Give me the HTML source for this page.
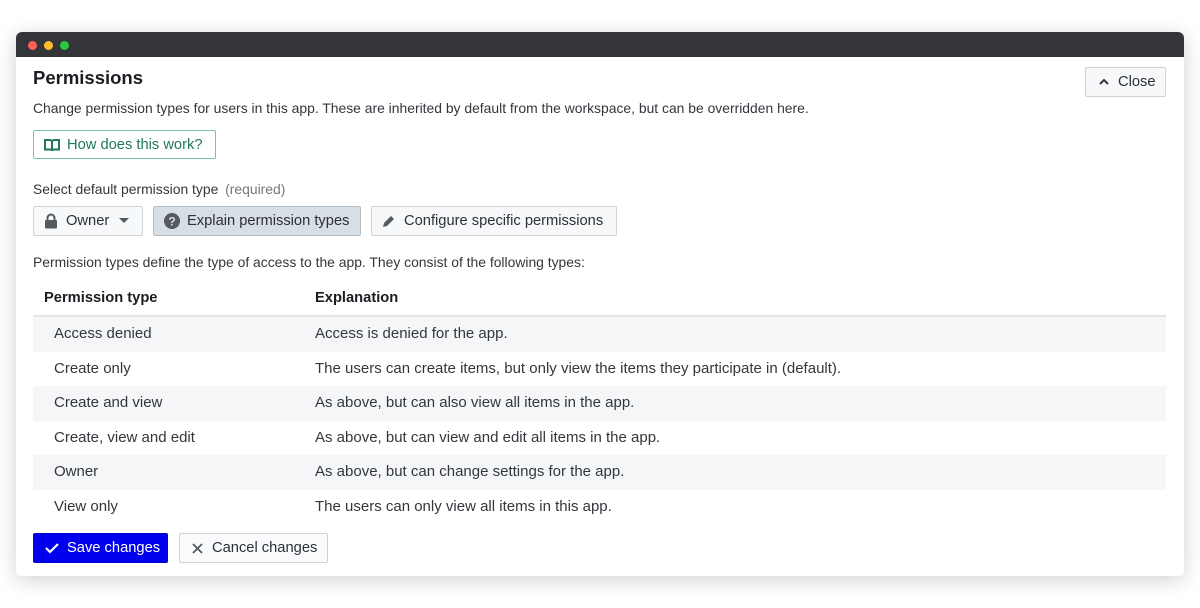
<!DOCTYPE html>
<html><head><style>
body{margin:0;width:1200px;height:608px;background:#fff;font-family:"Liberation Sans",sans-serif;color:#1f2328;position:relative;overflow:hidden}
.win{position:absolute;left:16px;top:32px;width:1168px;height:544px;background:#fff;border-radius:6px;box-shadow:0 4px 20px rgba(0,0,0,.18);overflow:hidden}
.bar{height:25px;background:#333538;position:relative}
.dot{position:absolute;top:9px;width:9px;height:9px;border-radius:50%}
.a{position:absolute;white-space:nowrap}
.btn{position:absolute;box-sizing:border-box;border:1px solid #cfd3d8;border-radius:2px;background:#f7f8f9;font-size:14.7px;display:flex;align-items:center;color:#2c3036;white-space:nowrap}
.row{position:absolute;left:17px;width:1133px;height:34.5px;font-size:15px;color:#33373c}
.row span{position:absolute;top:8px}
.sh{background:#f5f6f8}
</style></head><body>
<div class="win">
<div class="bar"><div class="dot" style="left:12px;background:#fe5f57"></div><div class="dot" style="left:28px;background:#febc2e"></div><div class="dot" style="left:44px;background:#28c840"></div></div>
<div class="a" style="left:17px;top:35px;font-size:18.5px;font-weight:bold;color:#1a1d21">Permissions</div>
<div class="a" style="left:17px;top:68px;font-size:13.9px;color:#33373c">Change permission types for users in this app. These are inherited by default from the workspace, but can be overridden here.</div>
<div class="btn" style="left:1069px;top:35px;width:81px;height:30px;padding-left:12px"><svg width="12" height="10" viewBox="0 0 12 10"><path d="M2 7L6 3L10 7" fill="none" stroke="#33373c" stroke-width="2"/></svg><span style="margin-left:8px">Close</span></div>
<div class="btn" style="left:17px;top:98px;width:183px;height:29px;padding-left:10px;border-color:#7fc0a3;background:#fff;color:#1f7a55"><svg width="16" height="14" viewBox="0 0 16 14"><path d="M1 2h5c1 0 2 1 2 2v9c0-1-1-1.5-2-1.5H1zM15 2h-5c-1 0-2 1-2 2v9c0-1 1-1.5 2-1.5h5z" fill="none" stroke="#1f7a55" stroke-width="2"/></svg><span style="margin-left:7px">How does this work?</span></div>
<div class="a" style="left:17px;top:149px;font-size:13.9px;color:#33373c">Select default permission type <span style="color:#777;margin-left:3px">(required)</span></div>
<div class="btn" style="left:17px;top:174px;width:110px;height:30px;padding-left:10px"><svg width="14" height="16" viewBox="0 0 14 16"><path d="M3.5 7V5a3.5 3.5 0 017 0v2" fill="none" stroke="#555a60" stroke-width="2"/><rect x="1" y="7" width="12" height="8.5" rx="1" fill="#555a60"/></svg><span style="margin-left:8px">Owner</span><svg style="margin-left:10px" width="10" height="6"><path d="M0 0h10L5 5z" fill="#555a60"/></svg></div>
<div class="btn" style="left:137px;top:174px;width:208px;height:30px;padding-left:10px;background:#d8dee5;border-color:#b7bfc8"><svg width="16" height="16" viewBox="0 0 16 16"><circle cx="8" cy="8" r="8" fill="#555a60"/><text x="8" y="12.5" font-size="12" font-weight="bold" text-anchor="middle" fill="#d8dee5" font-family="Liberation Sans">?</text></svg><span style="margin-left:7px">Explain permission types</span></div>
<div class="btn" style="left:355px;top:174px;width:246px;height:30px;padding-left:10px"><svg width="14" height="14" viewBox="0 0 14 14"><path d="M1 13l1-4 7-7 3 3-7 7z" fill="#555a60"/></svg><span style="margin-left:8px">Configure specific permissions</span></div>
<div class="a" style="left:17px;top:222px;font-size:13.9px;color:#33373c">Permission types define the type of access to the app. They consist of the following types:</div>
<div class="a" style="left:28px;top:258px;font-size:14.7px;font-weight:bold;color:#1a1d21">Permission type</div>
<div class="a" style="left:299px;top:258px;font-size:14.7px;font-weight:bold;color:#1a1d21">Explanation</div>
<div style="position:absolute;left:17px;top:283px;width:1133px;height:2px;background:#e2e5e8"></div>
<div class="row sh" style="top:285px"><span style="left:21px">Access denied</span><span style="left:282px">Access is denied for the app.</span></div>
<div class="row" style="top:319.5px"><span style="left:21px">Create only</span><span style="left:282px">The users can create items, but only view the items they participate in (default).</span></div>
<div class="row sh" style="top:354px"><span style="left:21px">Create and view</span><span style="left:282px">As above, but can also view all items in the app.</span></div>
<div class="row" style="top:388.5px"><span style="left:21px">Create, view and edit</span><span style="left:282px">As above, but can view and edit all items in the app.</span></div>
<div class="row sh" style="top:423px"><span style="left:21px">Owner</span><span style="left:282px">As above, but can change settings for the app.</span></div>
<div class="row" style="top:457.5px"><span style="left:21px">View only</span><span style="left:282px">The users can only view all items in this app.</span></div>
<div class="btn" style="left:17px;top:501px;width:135px;height:30px;padding-left:11px;background:#0000ee;border-color:#0000cc;color:#fff"><svg width="14" height="12" viewBox="0 0 14 12"><path d="M1 6l4 4 8-8" fill="none" stroke="#fff" stroke-width="2.2"/></svg><span style="margin-left:8px">Save changes</span></div>
<div class="btn" style="left:163px;top:501px;width:149px;height:30px;padding-left:12px;background:#fafbfc"><svg width="11" height="11" viewBox="0 0 11 11"><path d="M1 1l9 9M10 1l-9 9" stroke="#555a60" stroke-width="1.8"/></svg><span style="margin-left:9px">Cancel changes</span></div>
</div>
</body></html>
